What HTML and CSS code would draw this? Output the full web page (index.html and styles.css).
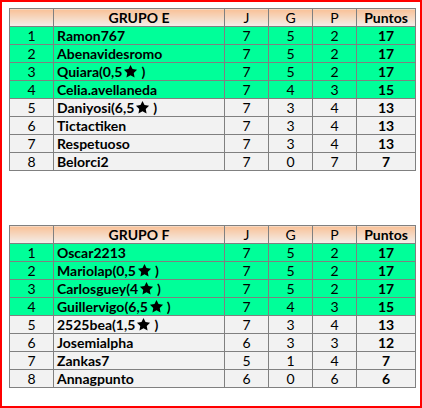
FILE: index.html
```html
<!DOCTYPE html>
<html lang="es">
<head>
<meta charset="utf-8">
<title>Grupos</title>
<link rel="stylesheet" href="styles.css">
</head>
<body>
<div class="frame">
  <table class="grp">
    <colgroup><col class="c-pos"><col class="c-name"><col class="c-n"><col class="c-n"><col class="c-n"><col class="c-pts"></colgroup>
    <thead>
      <tr><th></th><th class="b">GRUPO E</th><th>J</th><th>G</th><th>P</th><th class="b">Puntos</th></tr>
    </thead>
    <tbody>
      <tr class="up"><td>1</td><td class="name">Ramon767</td><td>7</td><td>5</td><td>2</td><td class="b">17</td></tr>
      <tr class="up"><td>2</td><td class="name">Abenavidesromo</td><td>7</td><td>5</td><td>2</td><td class="b">17</td></tr>
      <tr class="up"><td>3</td><td class="name">Quiara(0,5<svg class="star" viewBox="0 0 24 24"><path d="M12 1.5l3.2 6.6 7.3 1-5.3 5.1 1.3 7.3L12 18l-6.5 3.5 1.3-7.3L1.5 9.1l7.3-1z"/></svg>)</td><td>7</td><td>5</td><td>2</td><td class="b">17</td></tr>
      <tr class="up"><td>4</td><td class="name">Celia.avellaneda</td><td>7</td><td>4</td><td>3</td><td class="b">15</td></tr>
      <tr><td>5</td><td class="name">Daniyosi(6,5<svg class="star" viewBox="0 0 24 24"><path d="M12 1.5l3.2 6.6 7.3 1-5.3 5.1 1.3 7.3L12 18l-6.5 3.5 1.3-7.3L1.5 9.1l7.3-1z"/></svg>)</td><td>7</td><td>3</td><td>4</td><td class="b">13</td></tr>
      <tr><td>6</td><td class="name">Tictactiken</td><td>7</td><td>3</td><td>4</td><td class="b">13</td></tr>
      <tr><td>7</td><td class="name">Respetuoso</td><td>7</td><td>3</td><td>4</td><td class="b">13</td></tr>
      <tr><td>8</td><td class="name">Belorci2</td><td>7</td><td>0</td><td>7</td><td class="b">7</td></tr>
    </tbody>
  </table>
  <table class="grp second">
    <colgroup><col class="c-pos"><col class="c-name"><col class="c-n"><col class="c-n"><col class="c-n"><col class="c-pts"></colgroup>
    <thead>
      <tr><th></th><th class="b">GRUPO F</th><th>J</th><th>G</th><th>P</th><th class="b">Puntos</th></tr>
    </thead>
    <tbody>
      <tr class="up"><td>1</td><td class="name">Oscar2213</td><td>7</td><td>5</td><td>2</td><td class="b">17</td></tr>
      <tr class="up"><td>2</td><td class="name">Mariolap(0,5<svg class="star" viewBox="0 0 24 24"><path d="M12 1.5l3.2 6.6 7.3 1-5.3 5.1 1.3 7.3L12 18l-6.5 3.5 1.3-7.3L1.5 9.1l7.3-1z"/></svg>)</td><td>7</td><td>5</td><td>2</td><td class="b">17</td></tr>
      <tr class="up"><td>3</td><td class="name">Carlosguey(4<svg class="star" viewBox="0 0 24 24"><path d="M12 1.5l3.2 6.6 7.3 1-5.3 5.1 1.3 7.3L12 18l-6.5 3.5 1.3-7.3L1.5 9.1l7.3-1z"/></svg>)</td><td>7</td><td>5</td><td>2</td><td class="b">17</td></tr>
      <tr class="up"><td>4</td><td class="name">Guillervigo(6,5<svg class="star" viewBox="0 0 24 24"><path d="M12 1.5l3.2 6.6 7.3 1-5.3 5.1 1.3 7.3L12 18l-6.5 3.5 1.3-7.3L1.5 9.1l7.3-1z"/></svg>)</td><td>7</td><td>4</td><td>3</td><td class="b">15</td></tr>
      <tr><td>5</td><td class="name">2525bea(1,5<svg class="star" viewBox="0 0 24 24"><path d="M12 1.5l3.2 6.6 7.3 1-5.3 5.1 1.3 7.3L12 18l-6.5 3.5 1.3-7.3L1.5 9.1l7.3-1z"/></svg>)</td><td>7</td><td>3</td><td>4</td><td class="b">13</td></tr>
      <tr><td>6</td><td class="name">Josemialpha</td><td>6</td><td>3</td><td>3</td><td class="b">12</td></tr>
      <tr><td>7</td><td class="name">Zankas7</td><td>5</td><td>1</td><td>4</td><td class="b">7</td></tr>
      <tr><td>8</td><td class="name">Annagpunto</td><td>6</td><td>0</td><td>6</td><td class="b">6</td></tr>
    </tbody>
  </table>
</div>
</body>
</html>
```
FILE: styles.css
```css
html, body {
  margin: 0;
  padding: 0;
  background: #fff;
}
.frame {
  box-sizing: border-box;
  width: 422px;
  height: 408px;
  border: 2px solid #ff0000;
  padding: 6px 0 0 7px;
  font-family: Lato, "Open Sans", sans-serif;
  font-size: 14px;
  color: #000;
}
.grp {
  border-collapse: collapse;
  table-layout: fixed;
  width: 407px;
}
.second {
  margin-top: 54px;
}
.c-pos { width: 44px; }
.c-name { width: 171px; }
.c-n { width: 44px; }
.c-pts { width: 59px; }
.grp th,
.grp td {
  border: 1px solid #808080;
  height: 17px;
  padding: 0;
  line-height: 17px;
  text-align: center;
  font-weight: normal;
  background: #f2f2f2;
  white-space: nowrap;
  overflow: hidden;
}
.grp th {
  background: linear-gradient(to bottom, #f9c197, #f3efec);
}
.grp tr.up td {
  background: #00ff99;
}
.grp td.name {
  text-align: left;
  padding-left: 3px;
  font-weight: bold;
}
.grp .b {
  font-weight: bold;
}
.star {
  width: 15px;
  height: 15px;
  vertical-align: -2px;
  margin: 0 3px 0 1px;
  fill: #000;
}
```
